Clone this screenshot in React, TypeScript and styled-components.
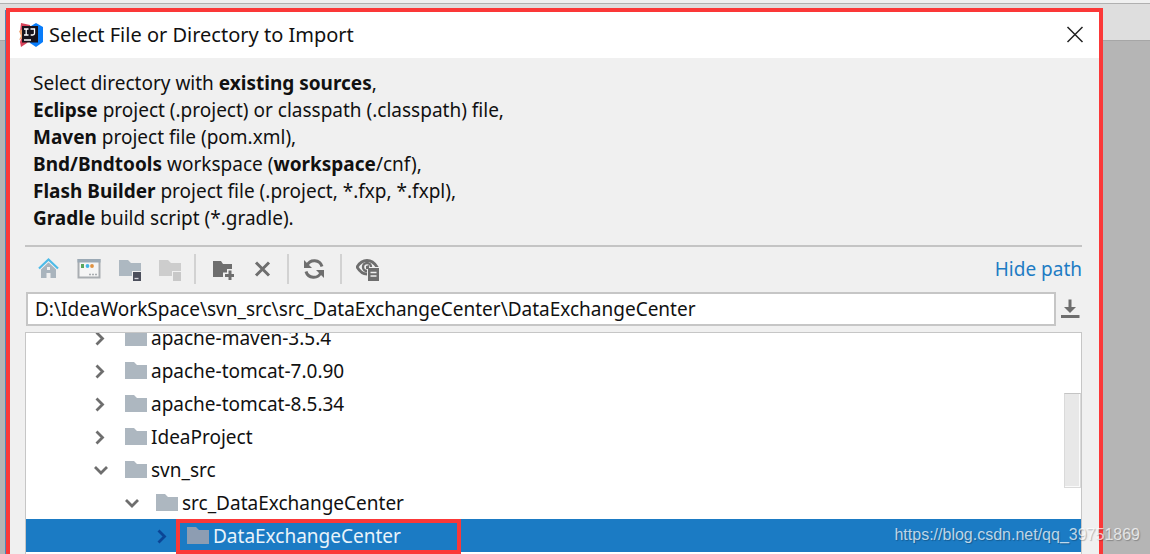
import React from "react";
import styled, { createGlobalStyle } from "styled-components";

const GlobalStyle = createGlobalStyle`
  *, *::before, *::after { box-sizing: border-box; }
  body {
    margin: 0;
    background: #b5b5b5;
    color: #111;
    font-family: "Noto Sans", "Open Sans", sans-serif;
    font-size: 19px;
  }
  button, input { font: inherit; color: inherit; }
`;

const Desktop = styled.div`
  position: relative;
  display: flex;
  height: 100vh;
  overflow: hidden;
  padding: 8px 47px 0 5px;
  background: linear-gradient(
    #f0f0f0 0 3px, #b0b0b0 3px 4px, #dedede 4px 40px, #a6a6a6 40px 41px, #b5b5b5 41px
  );
`;

const Dialog = styled.section`
  flex: 1;
  min-width: 0;
  display: flex;
  flex-direction: column;
  border: 4px solid #fb3838;
  border-bottom: 0;
  box-shadow: -1px 2px 0 #4f86b8;
  margin-left: 1px;
  background: #f0f0f0;
`;

const TitleBar = styled.header`
  display: flex;
  align-items: center;
  height: 46px;
  padding: 0 12px 0 9px;
  background: #fff;
`;

const Title = styled.h1`
  flex: 1;
  margin: 0 0 0 6px;
  font-size: 20px;
  font-weight: 400;
  line-height: 28px;
`;

const IconButton = styled.button`
  display: flex;
  flex: none;
  align-items: center;
  justify-content: center;
  width: 24px;
  height: 24px;
  padding: 0;
  border: 0;
  background: none;
`;

const Content = styled.div`
  flex: 1;
  min-height: 0;
  display: flex;
  flex-direction: column;
  padding: 0 17px 0 15px;
`;

const Message = styled.p`
  margin: 0;
  padding: 12px 0 13px 8px;
  line-height: 27px;
`;

const Toolbar = styled.div`
  display: flex;
  align-items: center;
  height: 47px;
  border-top: 2px solid #c4c4c4;
  padding: 0 0 2px 12px;
`;

const ToolGroup = styled.div`
  display: flex;
  gap: 16px;
`;

const Separator = styled.span`
  width: 2px;
  height: 30px;
  margin: 0 14px 0 13px;
  background: #d2d2d2;
`;

const PathLink = styled.a`
  margin-left: auto;
  color: #1e7cc4;
  text-decoration: none;
`;

const PathRow = styled.div`
  display: flex;
  align-items: center;
  gap: 2px;
  padding-left: 1px;
  margin-bottom: 6px;
`;

const PathInput = styled.input`
  flex: 1;
  min-width: 0;
  height: 34px;
  padding: 0 7px;
  border: 2px solid #c6c6c6;
  background: #fff;
  outline: 0;
`;

const TreePanel = styled.div`
  position: relative;
  flex: 1;
  min-height: 0;
  overflow: hidden;
  border: 1px solid #c6c6c6;
  border-bottom: 0;
  background: #fff;
`;

const Tree = styled.ul`
  list-style: none;
  margin: -12px 0 0;
  padding: 0;
`;

const TreeRow = styled.li<{ $level: number; $selected?: boolean }>`
  position: relative;
  display: flex;
  align-items: center;
  height: 33px;
  padding-left: ${(p) => 62 + p.$level * 31}px;
  background: ${(p) => (p.$selected ? "#1b7bc4" : "transparent")};
  color: ${(p) => (p.$selected ? "#e9f3fa" : "inherit")};
`;

const Folder = styled.svg`
  flex: none;
  margin: 0 4px 0 13px;
`;

const Marker = styled.span`
  position: absolute;
  z-index: 1;
  top: 0;
  left: 150px;
  width: 285px;
  height: 35px;
  border: 4px solid #fb3838;
`;

const ScrollThumb = styled.div`
  position: absolute;
  top: 60px;
  right: 0;
  width: 17px;
  height: 95px;
  border: 1px solid #dadada;
  border-top-color: #c4c4c4;
  background: #e8e8e8;
  box-shadow: inset -1px -1px 0 #fafafa;
`;

const Watermark = styled.span`
  position: absolute;
  right: 10px;
  bottom: 9px;
  font: 16px/20px "Liberation Sans", Arial, sans-serif;
  color: rgba(255, 255, 255, 0.72);
  text-shadow: 1px 1px 1px rgba(0, 0, 0, 0.25);
`;

const Svg = ({ size = 24, children }: { size?: number; children: React.ReactNode }) => (
  <svg width={size} height={size} viewBox={`0 0 ${size} ${size}`} fill="none" aria-hidden="true">
    {children}
  </svg>
);

const Logo = () => (
  <svg width="24" height="24" viewBox="0 0 24 24" aria-hidden="true">
    <path d="M2 0l9 2 2 10-5 8-6 4-1-5 2-6-2-4z" fill="#d8435b" />
    <path d="M0 8l4-2v9l-4 2 2-4z" fill="#f0a070" />
    <path d="M12 3l5-3 7 4v15l-7 5-6-4z" fill="#087cfa" />
    <path d="M3 3h16v16.500H3z" fill="#17131c" />
    <path d="M5 6h4.500M7.200 6v6M5 12h4.500M11.500 6h4v4.200q0 1.800-1.800 1.800h-2" stroke="#fff" strokeWidth="1.300" fill="none" />
    <path d="M5 17h7" stroke="#fff" strokeWidth="1.500" />
  </svg>
);

const HomeIcon = () => (
  <Svg>
    <path d="M4 12l7.500-7L19 12v9h-5.500v-5h-4v5H4z" fill="#a9b4bd" />
    <path d="M10 10h3v3h-3z" fill="#f0f0f0" />
    <path d="M2 11.500l9.500-9 9.500 9" stroke="#f0f0f0" strokeWidth="4" />
    <path d="M2 11.500l9.500-9 9.500 9" stroke="#4ebbe8" strokeWidth="2.200" />
  </Svg>
);

const DesktopIcon = () => (
  <Svg>
    <path d="M1.500 3h21v17.500h-21z" fill="#f5f5f5" stroke="#a9adb1" strokeWidth="2" />
    <path d="M.5 2h23v3.500H.5z" fill="#9ba9b5" />
    <path d="M4 7h3v4H4z" fill="#58a55d" />
    <circle cx="10.500" cy="9" r="1.900" fill="#42b4e6" />
    <circle cx="15" cy="9" r="1.900" fill="#df9140" />
    <path d="M12 17.500h2m1 0h2m1 0h2" stroke="#a9adb1" strokeWidth="1.400" />
  </Svg>
);

const ProjectIcon = () => (
  <Svg>
    <path d="M2 3h9l3 3h10v13H2z" fill="#adb8c1" />
    <path d="M15 14h11v11H15z" fill="#f0f0f0" />
    <path d="M16 15h8v9h-8z" fill="#4b4e5b" />
    <path d="M17.500 21.500h4" stroke="#d5d5dc" strokeWidth="1.300" />
  </Svg>
);

const ModuleIcon = () => (
  <Svg>
    <path d="M2 3h9l3 3h10v13H2z" fill="#cdcdcd" />
    <path d="M15 14h9v10h-9z" fill="#f0f0f0" />
    <path d="M16 15h8v9h-8z" fill="#c8c8c8" />
  </Svg>
);

const NewFolderIcon = () => (
  <Svg>
    <path d="M3 4h8l2 3h9v13H3z" fill="#6e6e6e" />
    <path d="M20 12v12M13 18.500h11" stroke="#f0f0f0" strokeWidth="6" />
    <path d="M20 13.500v9.500M15 18.500h9" stroke="#6e6e6e" strokeWidth="3" />
  </Svg>
);

const DeleteIcon = () => (
  <Svg>
    <path d="M6 5.500l13 13M19 5.500l-13 13" stroke="#6e6e6e" strokeWidth="3" />
  </Svg>
);

const RefreshIcon = () => (
  <Svg>
    <path d="M4 8.500a8 8 0 0 1 15 1M18 15.500a8 8 0 0 1-15-1" stroke="#6e6e6e" strokeWidth="3" />
    <path d="M1 3v8h8zM21 21v-8h-8z" fill="#6e6e6e" />
  </Svg>
);

const ShowHiddenIcon = () => (
  <Svg>
    <path d="M1 10Q5 3.500 11 3.500T21 10Q17 17 11 17T1 10z" stroke="#6e6e6e" strokeWidth="2.800" />
    <circle cx="11" cy="10" r="4" stroke="#6e6e6e" strokeWidth="2.400" />
    <path d="M11 10h12v15H11z" fill="#f0f0f0" />
    <path d="M10 9l3-1v4h-3z" fill="#6e6e6e" />
    <path d="M12 11h11v13H12z" fill="#6e6e6e" />
    <path d="M14.500 15.500h6M14.500 19h6" stroke="#f0f0f0" strokeWidth="1.500" />
  </Svg>
);

const CloseIcon = () => (
  <Svg>
    <path d="M4.500 4l15 15M19.500 4l-15 15" stroke="#222" strokeWidth="1.500" />
  </Svg>
);

const HistoryIcon = () => (
  <Svg>
    <path d="M12 2.500v9" stroke="#6e6e6e" strokeWidth="3" />
    <path d="M6 10h12l-6 6z" fill="#6e6e6e" />
    <path d="M3 19.500h18.500" stroke="#6e6e6e" strokeWidth="3" />
  </Svg>
);

const Chevron = ({ open, color }: { open?: boolean; color: string }) => (
  <Svg>
    <path
      d={open ? "M7 9l6 6 6-6" : "M8.500 6.500l6 6-6 6"}
      stroke={color}
      strokeWidth="2.800"
    />
  </Svg>
);

interface Entry {
  name: string;
  level: number;
  open?: boolean;
  selected?: boolean;
}

const entries: Entry[] = [
  { name: "apache-maven-3.5.4", level: 0 },
  { name: "apache-tomcat-7.0.90", level: 0 },
  { name: "apache-tomcat-8.5.34", level: 0 },
  { name: "IdeaProject", level: 0 },
  { name: "svn_src", level: 0, open: true },
  { name: "src_DataExchangeCenter", level: 1, open: true },
  { name: "DataExchangeCenter", level: 2, selected: true },
];

export default function App() {
  return (
    <Desktop>
      <GlobalStyle />
      <Dialog role="dialog" aria-labelledby="dialog-title">
        <TitleBar>
          <Logo />
          <Title id="dialog-title">Select File or Directory to Import</Title>
          <IconButton aria-label="Close"><CloseIcon /></IconButton>
        </TitleBar>
        <Content>
          <Message>
            Select directory with <b>existing sources</b>,<br />
            <b>Eclipse</b> project (.project) or classpath (.classpath) file,<br />
            <b>Maven</b> project file (pom.xml),<br />
            <b>Bnd/Bndtools</b> workspace (<b>workspace</b>/cnf),<br />
            <b>Flash Builder</b> project file (.project, *.fxp, *.fxpl),<br />
            <b>Gradle</b> build script (*.gradle).
          </Message>
          <Toolbar>
            <ToolGroup>
              <IconButton aria-label="Home directory"><HomeIcon /></IconButton>
              <IconButton aria-label="Desktop directory"><DesktopIcon /></IconButton>
              <IconButton aria-label="Project directory"><ProjectIcon /></IconButton>
              <IconButton aria-label="Module directory" disabled><ModuleIcon /></IconButton>
            </ToolGroup>
            <Separator />
            <ToolGroup>
              <IconButton aria-label="New folder"><NewFolderIcon /></IconButton>
              <IconButton aria-label="Delete"><DeleteIcon /></IconButton>
            </ToolGroup>
            <Separator />
            <IconButton aria-label="Refresh"><RefreshIcon /></IconButton>
            <Separator />
            <IconButton aria-label="Show hidden files"><ShowHiddenIcon /></IconButton>
            <PathLink href="#path">Hide path</PathLink>
          </Toolbar>
          <PathRow>
            <PathInput
              id="path"
              aria-label="Path"
              defaultValue={"D:\\IdeaWorkSpace\\svn_src\\src_DataExchangeCenter\\DataExchangeCenter"}
            />
            <IconButton aria-label="Recent paths"><HistoryIcon /></IconButton>
          </PathRow>
          <TreePanel>
            <Tree role="tree">
              {entries.map((e) => (
                <TreeRow
                  key={e.name}
                  role="treeitem"
                  aria-expanded={!!e.open}
                  aria-selected={!!e.selected}
                  $level={e.level}
                  $selected={e.selected}
                >
                  <IconButton aria-label={`Toggle ${e.name}`}>
                    <Chevron open={e.open} color={e.selected ? "#0b4596" : "#6e6e6e"} />
                  </IconButton>
                  <Folder width="22" height="17" viewBox="0 0 22 17" aria-hidden="true">
                    <path d="M0 0h9l3 3h10v14H0z" fill={e.selected ? "#8d9db2" : "#adb7c0"} />
                  </Folder>
                  {e.name}
                  {e.selected && <Marker />}
                </TreeRow>
              ))}
            </Tree>
            <ScrollThumb />
          </TreePanel>
        </Content>
      </Dialog>
      <Watermark>https://blog.csdn.net/qq_39751869</Watermark>
    </Desktop>
  );
}
